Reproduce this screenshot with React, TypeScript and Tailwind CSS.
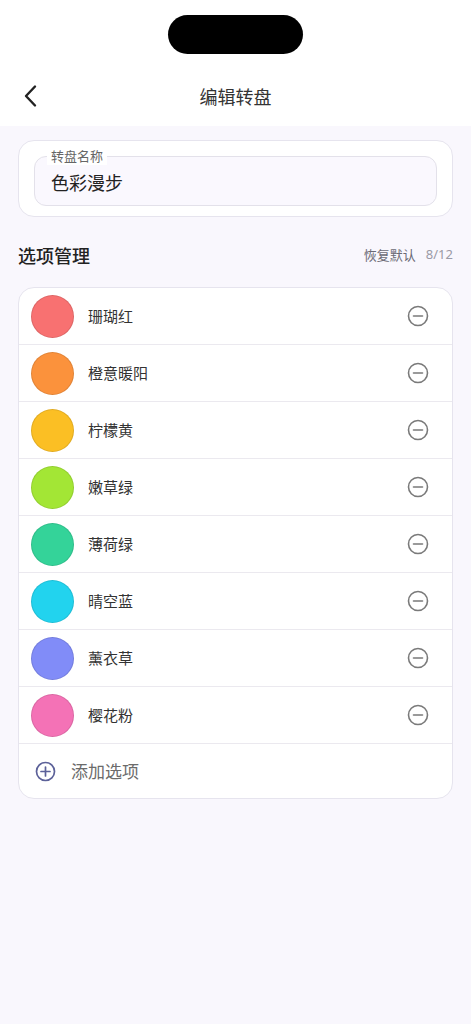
import React from "react";

const items = [
  { name: "珊瑚红", color: "#f87171" },
  { name: "橙意暖阳", color: "#fb923c" },
  { name: "柠檬黄", color: "#fbbf24" },
  { name: "嫩草绿", color: "#a3e635" },
  { name: "薄荷绿", color: "#34d399" },
  { name: "晴空蓝", color: "#22d3ee" },
  { name: "薰衣草", color: "#818cf8" },
  { name: "樱花粉", color: "#f472b6" },
];

function MinusIcon() {
  return (
    <svg width="22" height="22" viewBox="0 0 22 22" fill="none">
      <circle cx="11" cy="11" r="9.5" stroke="#7a7a7a" strokeWidth="1.6" />
      <line x1="6.5" y1="11" x2="15.5" y2="11" stroke="#7a7a7a" strokeWidth="1.6" strokeLinecap="round" />
    </svg>
  );
}

function PlusIcon() {
  return (
    <svg width="21" height="21" viewBox="0 0 21 21" fill="none">
      <circle cx="10.5" cy="10.5" r="9" stroke="#5c6199" strokeWidth="1.7" />
      <line x1="6" y1="10.5" x2="15" y2="10.5" stroke="#5c6199" strokeWidth="1.7" strokeLinecap="round" />
      <line x1="10.5" y1="6" x2="10.5" y2="15" stroke="#5c6199" strokeWidth="1.7" strokeLinecap="round" />
    </svg>
  );
}

export default function App() {
  return (
    <div
      className="min-h-[1024px] w-[471px] bg-[#f9f7fd]"
      style={{ fontFamily: '"Noto Sans CJK SC", "Noto Sans", sans-serif' }}
    >
      <div className="bg-white h-[126px] flex flex-col items-center">
        <div className="mt-[15px] h-[39px] w-[135px] rounded-full bg-black" />
        <div className="mt-[12px] h-[60px] w-full relative flex items-center justify-center">
          <div className="absolute left-[22px] top-1/2 -translate-y-1/2">
            <svg width="18" height="24" viewBox="0 0 18 24" fill="none">
              <path d="M13 2.5 L4 12 L13 21.5" stroke="#222" strokeWidth="2.4" strokeLinecap="round" strokeLinejoin="round" />
            </svg>
          </div>
          <span className="text-[18px] text-[#333] leading-none">编辑转盘</span>
        </div>
      </div>

      <div className="px-[18px]">
        <div className="mt-[14px] h-[77px] rounded-[16px] border border-[#e6e4ee] bg-white pt-[15px] px-[15px]">
          <div className="relative h-[50px] rounded-[12px] border border-[#e3e1ea] bg-[#faf8fe] flex items-center pl-[16px]">
            <span className="absolute left-[12px] -top-[10px] px-[4px] bg-white text-[13px] leading-[18px] text-[#666]">
              转盘名称
            </span>
            <span className="text-[18px] text-[#222] leading-none mt-[2px]">色彩漫步</span>
          </div>
        </div>

        <div className="mt-[23px] flex items-center justify-between h-[30px]">
          <span className="text-[18px] font-medium text-[#222]">选项管理</span>
          <div className="flex items-center gap-[10px] text-[13px]">
            <span className="text-[#6b6a75]">恢复默认</span>
            <span className="text-[#9b9aa6]" style={{ fontFamily: '"Noto Sans", sans-serif' }}>8/12</span>
          </div>
        </div>

        <div className="mt-[17px] rounded-[16px] border border-[#e6e4ee] bg-white overflow-hidden">
          {items.map((it) => (
            <div key={it.name} className="h-[57px] flex items-center border-b border-[#ebe9ef] pl-[12px] pr-[23px]">
              <div
                className="h-[43px] w-[43px] rounded-full border border-black/10"
                style={{ backgroundColor: it.color }}
              />
              <span className="ml-[14px] text-[15px] text-[#333] flex-1">{it.name}</span>
              <MinusIcon />
            </div>
          ))}
          <div className="h-[54px] flex items-center pl-[16px]">
            <PlusIcon />
            <span className="ml-[15px] text-[17px] text-[#6b6b6b]">添加选项</span>
          </div>
        </div>
      </div>
    </div>
  );
}
